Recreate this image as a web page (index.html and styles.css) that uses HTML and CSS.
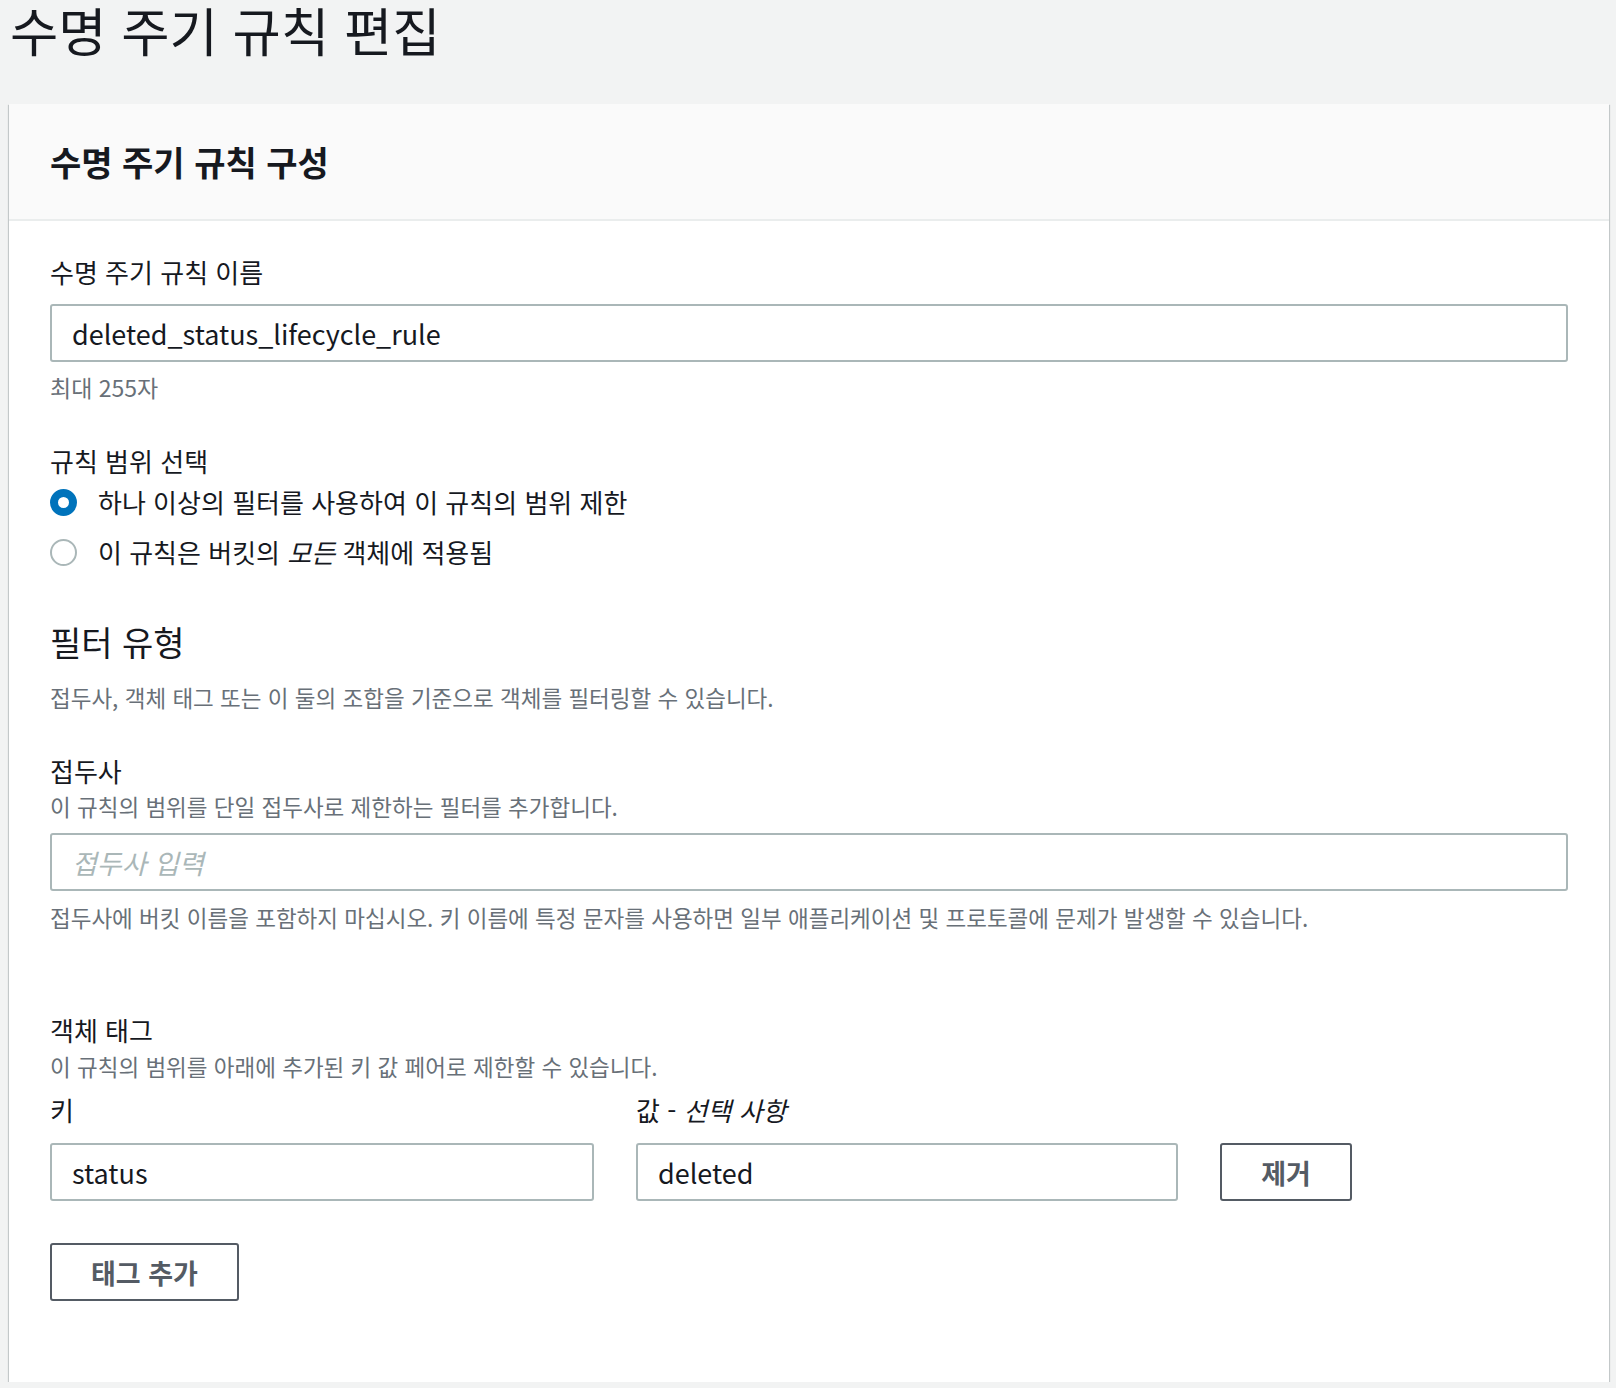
FILE: index.html
```html
<!DOCTYPE html>
<html lang="ko">
<head>
<meta charset="utf-8">
<title>수명 주기 규칙 편집</title>
<link rel="stylesheet" href="styles.css">
</head>
<body>
<div class="page">
  <h1 class="page-title">수명 주기 규칙 편집</h1>
  <section class="card">
    <header class="card-header">
      <h2 class="card-title">수명 주기 규칙 구성</h2>
    </header>
    <div class="card-body">
      <div class="field">
        <label class="label">수명 주기 규칙 이름</label>
        <input class="input input-name" type="text" value="deleted_status_lifecycle_rule">
        <div class="hint hint-max">최대 255자</div>
      </div>

      <div class="field field-scope">
        <div class="label">규칙 범위 선택</div>
        <div class="radios">
          <label class="radio-row">
            <span class="radio radio-checked"></span>
            <span class="radio-text">하나 이상의 필터를 사용하여 이 규칙의 범위 제한</span>
          </label>
          <label class="radio-row">
            <span class="radio"></span>
            <span class="radio-text">이 규칙은 버킷의 <em>모든</em> 객체에 적용됨</span>
          </label>
        </div>
      </div>

      <h3 class="section-title">필터 유형</h3>
      <p class="hint section-desc">접두사, 객체 태그 또는 이 둘의 조합을 기준으로 객체를 필터링할 수 있습니다.</p>

      <div class="field field-prefix">
        <div class="label">접두사</div>
        <div class="hint label-desc">이 규칙의 범위를 단일 접두사로 제한하는 필터를 추가합니다.</div>
        <input class="input input-prefix" type="text" placeholder="접두사 입력">
        <div class="hint hint-prefix">접두사에 버킷 이름을 포함하지 마십시오. 키 이름에 특정 문자를 사용하면 일부 애플리케이션 및 프로토콜에 문제가 발생할 수 있습니다.</div>
      </div>

      <div class="field field-tags">
        <div class="label">객체 태그</div>
        <div class="hint label-desc">이 규칙의 범위를 아래에 추가된 키 값 페어로 제한할 수 있습니다.</div>
        <div class="tag-grid">
          <div class="label tag-label">키</div>
          <div class="label tag-label">값 - <em>선택 사항</em></div>
          <div></div>
          <input class="input" type="text" value="status">
          <input class="input" type="text" value="deleted">
          <button class="btn btn-remove" type="button">제거</button>
        </div>
        <button class="btn btn-add" type="button">태그 추가</button>
      </div>
    </div>
  </section>
</div>
</body>
</html>
```

FILE: styles.css
```css
html, body {
  margin: 0;
  padding: 0;
  background: #f2f3f3;
}

body {
  font-family: "Noto Sans CJK KR", "Noto Sans", sans-serif;
  color: #16191f;
}

.page {
  padding: 0 7px 0 9px;
}

.page-title {
  margin: 0;
  padding: 0 0 0 1px;
  height: 104px;
  font-size: 52.5px;
  line-height: 58px;
  font-weight: 400;
  letter-spacing: 0;
}

.card {
  background: #ffffff;
  box-shadow: 0 1px 1px 0 rgba(0, 28, 36, 0.3), 1px 1px 1px 0 rgba(0, 28, 36, 0.15), -1px 1px 1px 0 rgba(0, 28, 36, 0.15);
}

.card-header {
  height: 115px;
  display: flex;
  align-items: center;
  padding: 0 41px;
  background: #fafafa;
  border-bottom: 2px solid #eaeded;
}

.card-title {
  margin: 0;
  font-size: 34px;
  font-weight: 700;
  line-height: 40px;
}

.card-body {
  padding: 36px 41px 81px 41px;
}

.label {
  display: block;
  font-size: 26px;
  line-height: 30px;
  color: #16191f;
}

.hint {
  font-size: 22.5px;
  line-height: 28px;
  color: #687078;
  margin: 0;
}

.input {
  display: block;
  box-sizing: border-box;
  width: 100%;
  height: 58px;
  margin: 0;
  padding: 0 20px;
  border: 2px solid #aab7b8;
  border-radius: 3px;
  background: #ffffff;
  font-family: "Noto Sans CJK KR", "Noto Sans", sans-serif;
  font-size: 27px;
  color: #16191f;
  outline: none;
}

.input::placeholder {
  color: #aab7b8;
  font-style: italic;
}

.input-name {
  margin-top: 17px;
}

.hint-max {
  margin-top: 11px;
  font-size: 23px;
}

.field-scope {
  margin-top: 45px;
}

.radios {
  margin-top: 6px;
  display: flex;
  flex-direction: column;
  gap: 10px;
}

.radio-row {
  display: flex;
  align-items: center;
  height: 40px;
  gap: 21px;
}

.radio {
  box-sizing: border-box;
  width: 27px;
  height: 27px;
  border-radius: 50%;
  border: 2px solid #aab7b8;
  background: #ffffff;
  flex: none;
}

.radio-checked {
  border: 8px solid #0073bb;
}

.radio-text {
  font-size: 26px;
  line-height: 30px;
}

.radio-text em,
.tag-label em {
  font-style: italic;
}

.section-title {
  margin: 50px 0 0 0;
  font-size: 34px;
  line-height: 40px;
  font-weight: 400;
}

.section-desc {
  margin-top: 21px;
}

.field-prefix {
  margin-top: 45px;
}

.label-desc {
  margin-top: 6px;
}

.input-prefix {
  margin-top: 13px;
}

.hint-prefix {
  margin-top: 12px;
}

.field-tags {
  margin-top: 84px;
}

.field-tags .label-desc {
  margin-top: 7px;
}

.tag-grid {
  margin-top: 15px;
  display: grid;
  grid-template-columns: 544px 542px 132px;
  column-gap: 42px;
  row-gap: 18px;
  align-items: end;
}

.btn {
  box-sizing: border-box;
  height: 58px;
  border: 2px solid #545b64;
  border-radius: 3px;
  background: #ffffff;
  color: #545b64;
  font-family: "Noto Sans CJK KR", "Noto Sans", sans-serif;
  font-size: 27px;
  font-weight: 700;
  padding: 0;
  cursor: pointer;
}

.btn-remove {
  width: 132px;
}

.btn-add {
  display: block;
  margin-top: 42px;
  width: 189px;
}
```
